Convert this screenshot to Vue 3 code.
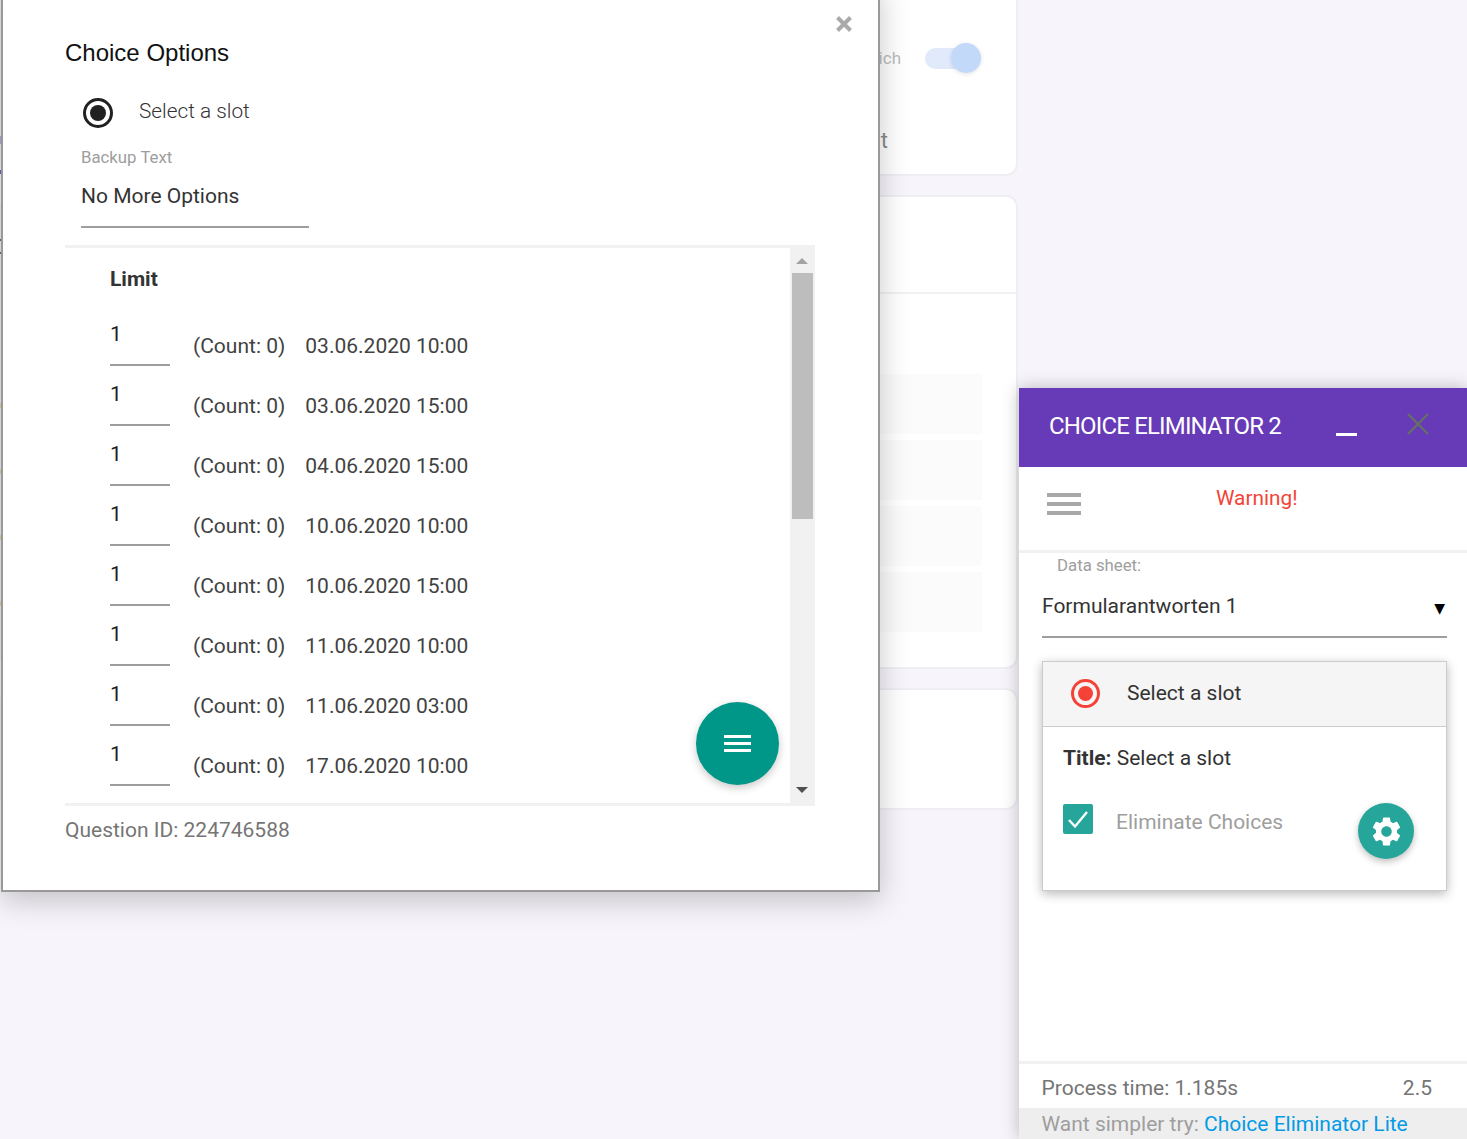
<template>
  <div class="page">
    <!-- page behind the dialog, mostly washed out -->
    <main class="behind">
      <section class="card card-top">
        <div class="switch-row">
          <span class="ghost-label">Which</span>
          <span class="toggle"><i class="knob"></i></span>
        </div>
        <div class="ghost-text">Count</div>
      </section>
      <section class="card card-list">
        <div class="card-head"></div>
        <div class="ghost-rows">
          <div v-for="n in 4" :key="n" class="ghost-row"></div>
        </div>
      </section>
      <section class="card card-last"></section>
    </main>

    <!-- bits of the page that peek out left of the dialog -->
    <i
      v-for="mark in edgeMarks"
      :key="mark.top"
      class="edge-mark"
      :style="{ top: mark.top + 'px', height: mark.height + 'px', background: mark.color }"
    ></i>

    <!-- sidebar -->
    <aside class="sidebar">
      <header class="side-head">
        <h1>CHOICE ELIMINATOR 2</h1>
        <span class="minimize"></span>
        <svg class="side-close" viewBox="0 0 22 22" width="22" height="22">
          <path d="M1 1 21 21M21 1 1 21" stroke="#666e66" stroke-width="2.4" fill="none" />
        </svg>
      </header>
      <div class="side-tools">
        <div class="burger"><i></i><i></i><i></i></div>
        <div class="warning">Warning!</div>
      </div>
      <div class="side-body">
        <label class="sheet-label">Data sheet:</label>
        <div class="sheet-select">
          <span class="sheet-value">Formularantworten 1</span>
          <span class="arrow">▼</span>
        </div>
        <article class="question">
          <div class="question-head">
            <span class="radio-red"><i></i></span>
            <span>Select a slot</span>
          </div>
          <div class="question-body">
            <p class="q-title"><b>Title:</b> Select a slot</p>
            <div class="q-check">
              <span class="checkbox">
                <svg viewBox="0 0 30 30" width="30" height="30">
                  <path d="M6 16 12 22.5 24 8" stroke="#fff" stroke-width="2.4" fill="none" />
                </svg>
              </span>
              <span class="check-label">Eliminate Choices</span>
            </div>
            <button class="gear-btn">
              <svg viewBox="0 0 24 24" width="35" height="35">
                <path fill="#fff" d="M19.14,12.94c0.04-0.3,0.06-0.61,0.06-0.94c0-0.32-0.02-0.64-0.07-0.94l2.03-1.58c0.18-0.14,0.23-0.41,0.12-0.61 l-1.92-3.32c-0.12-0.22-0.37-0.29-0.59-0.22l-2.39,0.96c-0.5-0.38-1.03-0.7-1.62-0.94L14.4,2.81c-0.04-0.24-0.24-0.41-0.48-0.41 h-3.84c-0.24,0-0.43,0.17-0.47,0.41L9.25,5.35C8.66,5.59,8.12,5.92,7.63,6.29L5.24,5.33c-0.22-0.08-0.47,0-0.59,0.22L2.74,8.87 C2.62,9.08,2.66,9.34,2.86,9.48l2.03,1.58C4.84,11.36,4.8,11.69,4.8,12s0.02,0.64,0.07,0.94l-2.03,1.58 c-0.18,0.14-0.23,0.41-0.12,0.61l1.92,3.32c0.12,0.22,0.37,0.29,0.59,0.22l2.39-0.96c0.5,0.38,1.03,0.7,1.62,0.94l0.36,2.54 c0.05,0.24,0.24,0.41,0.48,0.41h3.84c0.24,0,0.44-0.17,0.47-0.41l0.36-2.54c0.59-0.24,1.13-0.56,1.62-0.94l2.39,0.96 c0.22,0.08,0.47,0,0.59-0.22l1.92-3.32c0.12-0.22,0.07-0.47-0.12-0.61L19.14,12.94z M12,15.6c-1.98,0-3.6-1.62-3.6-3.6 s1.62-3.6,3.6-3.6s3.6,1.62,3.6,3.6S13.98,15.6,12,15.6z" />
              </svg>
            </button>
          </div>
        </article>
      </div>
      <footer class="side-foot">
        <div class="process">
          <span>Process time: 1.185s</span>
          <span>2.5</span>
        </div>
        <div class="simpler">Want simpler try: <a href="#">Choice Eliminator Lite</a></div>
      </footer>
    </aside>

    <!-- dialog -->
    <div class="dialog">
      <svg class="dialog-close" viewBox="0 0 18 18" width="18" height="18">
        <path d="M2.5 2.5 15.5 15.5M15.5 2.5 2.5 15.5" stroke="#aaa" stroke-width="4" fill="none" />
      </svg>
      <h2>Choice Options</h2>
      <div class="dialog-radio">
        <span class="radio-dark"><i></i></span>
        <span class="radio-text">Select a slot</span>
      </div>
      <label class="backup-label">Backup Text</label>
      <div class="backup-input">No More Options</div>

      <div class="limits">
        <div class="limits-list">
          <div class="limit-title">Limit</div>
          <div v-for="row in slots" :key="row" class="limit-row">
            <span class="limit-input">1</span>
            <span class="limit-count">(Count: 0)</span>
            <span class="limit-date">{{ row }}</span>
          </div>
          <button class="menu-btn">
            <i></i><i></i><i></i>
          </button>
        </div>
        <div class="scrollbar">
          <span class="sb-up"></span>
          <span class="sb-thumb"></span>
          <span class="sb-down"></span>
        </div>
      </div>
      <div class="question-id">Question ID: 224746588</div>
    </div>
  </div>
</template>

<script setup>
const slots = [
  '03.06.2020 10:00',
  '03.06.2020 15:00',
  '04.06.2020 15:00',
  '10.06.2020 10:00',
  '10.06.2020 15:00',
  '11.06.2020 10:00',
  '11.06.2020 03:00',
  '17.06.2020 10:00'
]

const edgeMarks = [
  { top: 136, height: 8, color: '#b9a6dc' },
  { top: 170, height: 4, color: '#7e57c2' },
  { top: 239, height: 2, color: '#607078' },
  { top: 252, height: 2, color: '#607078' },
  { top: 403, height: 5, color: '#e8d3ae' },
  { top: 469, height: 5, color: '#e8d3ae' },
  { top: 535, height: 5, color: '#e8d3ae' },
  { top: 601, height: 5, color: '#e8d3ae' }
]
</script>

<style>
html, body {
  margin: 0;
  background: #f7f5fb;
}
</style>

<style scoped>
.page {
  position: relative;
  width: 1467px;
  height: 1139px;
  overflow: hidden;
  background: #f7f5fb;
  font-family: Roboto, sans-serif;
  color: #212121;
}

.edge-mark {
  position: absolute;
  left: 0;
  width: 1px;
}

.behind {
  width: 1018px;
  display: flex;
  flex-direction: column;
  gap: 19px;
  margin-top: -20px;
}

.card {
  background: #fff;
  border: 2px solid #efeef3;
  border-radius: 12px;
  box-sizing: border-box;
}

.card-top {
  height: 196px;
  padding: 60px 39px 0 0;
}

.switch-row {
  display: flex;
  justify-content: flex-end;
  align-items: center;
  gap: 24px;
  height: 32px;
}

.ghost-label {
  font-size: 17px;
  color: #bdbdbd;
}

.toggle {
  position: relative;
  display: block;
  width: 52px;
  height: 21px;
  border-radius: 11px;
  background: #e0eafa;
}

.knob {
  position: absolute;
  right: -4px;
  top: -5px;
  width: 30px;
  height: 30px;
  border-radius: 50%;
  background: #c3d9fa;
  box-shadow: 0 1px 4px rgba(0, 0, 0, .12);
}

.ghost-text {
  margin-top: 54px;
  padding-right: 89px;
  text-align: right;
  font-size: 22px;
  line-height: 26px;
  color: #8a8a8a;
}

.card-list {
  height: 474px;
}

.card-head {
  height: 97px;
  box-sizing: border-box;
  border-bottom: 2px solid #f2f2f2;
}

.ghost-rows {
  display: flex;
  flex-direction: column;
  gap: 6px;
  margin: 80px 34px 0 0;
}

.ghost-row {
  height: 60px;
  background: #fbfbfb;
}

.card-last {
  height: 122px;
}

.sidebar {
  position: absolute;
  top: 388px;
  right: 0;
  bottom: 0;
  width: 448px;
  display: flex;
  flex-direction: column;
  background: #fff;
  box-shadow: 0 0 16px rgba(0, 0, 0, .25);
}

.side-head {
  height: 79px;
  display: flex;
  align-items: center;
  background: #673ab7;
  padding-left: 30px;
  box-sizing: border-box;
  position: relative;
}

.side-head h1 {
  margin: 0 0 4px;
  font-size: 24px;
  font-weight: 400;
  color: #fff;
  letter-spacing: -.83px;
}

.minimize {
  position: absolute;
  left: 317px;
  top: 45px;
  width: 21px;
  height: 3px;
  background: #fff;
}

.side-close {
  position: absolute;
  left: 388px;
  top: 25px;
}

.side-tools {
  height: 83px;
  flex: none;
  display: flex;
  border-bottom: 3px solid #f1f1f1;
  position: relative;
}

.burger {
  margin: 26px 0 0 28px;
  width: 34px;
  display: flex;
  flex-direction: column;
  gap: 5px;
}

.burger i {
  height: 4px;
  background: #a8a8a8;
}

.warning {
  position: absolute;
  left: 197px;
  top: 19px;
  font-size: 20.8px;
  line-height: 24px;
  color: #f44336;
}

.side-body {
  flex: 1;
  padding: 0 20px 0 23px;
}

.sheet-label {
  display: block;
  margin-left: 15px;
  font-size: 16.8px;
  line-height: 24px;
  color: #9e9e9e;
}

.sheet-select {
  display: flex;
  justify-content: space-between;
  align-items: center;
  height: 59px;
  border-bottom: 2px solid #9e9e9e;
  font-size: 21px;
  color: #333;
  padding-right: 2px;
}

.sheet-value {
  margin-bottom: 2px;
}

.arrow {
  font-size: 14px;
  color: #000;
  margin-top: 2px;
  font-family: "DejaVu Sans", sans-serif;
}

.question {
  margin-top: 23px;
  border: 1px solid #ccc;
  height: 230px;
  box-sizing: border-box;
  box-shadow: 0 3px 10px rgba(0, 0, 0, .28);
}

.question-head {
  height: 65px;
  display: flex;
  align-items: center;
  background: #f5f5f5;
  border-bottom: 1px solid #ccc;
  box-sizing: border-box;
  font-size: 21px;
  color: #333;
  padding: 0 0 2px 28px;
  gap: 27px;
}

.radio-red {
  width: 29px;
  height: 29px;
  box-sizing: border-box;
  border: 3px solid #f44336;
  border-radius: 50%;
  display: flex;
  align-items: center;
  justify-content: center;
}

.radio-red i {
  width: 15px;
  height: 15px;
  border-radius: 50%;
  background: #f44336;
}

.question-body {
  position: relative;
  padding: 18px 20px;
}

.q-title {
  margin: 0;
  font-size: 21px;
  line-height: 26px;
  color: #333;
}

.q-title b {
  font-weight: 700;
}

.q-check {
  display: flex;
  align-items: flex-start;
  gap: 23px;
  margin-top: 33px;
}

.checkbox {
  width: 30px;
  height: 30px;
  border-radius: 2px;
  background: #26a69a;
}

.checkbox svg {
  display: block;
}

.check-label {
  font-size: 21px;
  line-height: 36px;
  color: #9e9e9e;
}

.gear-btn {
  position: absolute;
  left: 315px;
  top: 76px;
  width: 56px;
  height: 56px;
  padding: 0;
  border: 0;
  border-radius: 50%;
  background: #26a69a;
  display: flex;
  align-items: center;
  justify-content: center;
  box-shadow: 0 3px 7px rgba(0, 0, 0, .25);
}

.side-foot {
  border-top: 3px solid #f1f1f1;
  font-size: 21px;
}

.process {
  display: flex;
  justify-content: space-between;
  height: 44px;
  box-sizing: border-box;
  padding: 10px 35px 0 22.5px;
  line-height: 28px;
  color: #757575;
}

.simpler {
  height: 31px;
  padding-left: 22.5px;
  line-height: 32px;
  background: #eee;
  color: #9e9e9e;
}

.simpler a {
  color: #039be5;
  text-decoration: none;
}

.dialog {
  position: absolute;
  left: 1px;
  top: -20px;
  width: 879px;
  height: 912px;
  box-sizing: border-box;
  background: #fff;
  border: 2px solid #999;
  padding: 56px 62px 0;
  box-shadow: 0 8px 28px rgba(0, 0, 0, .22);
}

.dialog-close {
  position: absolute;
  right: 25px;
  top: 33px;
}

.dialog h2 {
  margin: 0;
  font-family: "Liberation Sans", Arial, sans-serif;
  font-size: 24px;
  line-height: 30px;
  font-weight: 400;
  color: #111;
}

.dialog-radio {
  display: flex;
  align-items: center;
  gap: 26px;
  margin: 30px 0 0 18px;
  height: 30px;
  font-size: 20.8px;
  font-weight: 300;
  color: #333;
}

.radio-text {
  margin-bottom: 4px;
}

.radio-dark {
  width: 30px;
  height: 30px;
  box-sizing: border-box;
  border: 3px solid #212121;
  border-radius: 50%;
  display: flex;
  align-items: center;
  justify-content: center;
}

.radio-dark i {
  width: 16px;
  height: 16px;
  border-radius: 50%;
  background: #212121;
}

.backup-label {
  display: block;
  margin: 17px 0 0 16px;
  font-size: 16.8px;
  line-height: 24px;
  color: #9e9e9e;
}

.backup-input {
  margin: 1px 0 0 16px;
  width: 228px;
  height: 58px;
  box-sizing: border-box;
  padding-top: 13px;
  border-bottom: 2px solid #9e9e9e;
  font-size: 21px;
  line-height: 26px;
  color: #333;
}

.limits {
  display: flex;
  width: 750px;
  height: 561px;
  margin-top: 17px;
  border-top: 3px solid #f1f1f1;
  border-bottom: 3px solid #f1f1f1;
  box-sizing: border-box;
  overflow: hidden;
}

.limits-list {
  position: relative;
  flex: 1;
  padding-left: 45px;
  overflow: hidden;
}

.limit-title {
  margin-top: 17px;
  height: 41px;
  font-size: 21px;
  line-height: 28px;
  font-weight: 700;
  color: #333;
}

.limit-row {
  display: flex;
  align-items: flex-end;
  height: 60px;
  font-size: 21px;
  color: #424242;
}

.limit-input {
  width: 60px;
  height: 46px;
  box-sizing: border-box;
  border-bottom: 2px solid #9e9e9e;
  line-height: 28px;
  color: #212121;
}

.limit-count {
  margin: 0 20px 0 23px;
  line-height: 40px;
}

.limit-date {
  line-height: 40px;
}

.menu-btn {
  position: absolute;
  right: 11px;
  bottom: 18px;
  width: 83px;
  height: 83px;
  border: 0;
  border-radius: 50%;
  background: #009688;
  display: flex;
  flex-direction: column;
  align-items: center;
  justify-content: center;
  gap: 4px;
  box-shadow: 0 3px 8px rgba(0, 0, 0, .22);
}

.menu-btn i {
  width: 27px;
  height: 3px;
  background: #fff;
}

.scrollbar {
  flex: none;
  width: 25px;
  background: #f1f1f1;
  position: relative;
}

.sb-up, .sb-down {
  position: absolute;
  left: 6px;
  width: 0;
  height: 0;
  border-left: 6px solid transparent;
  border-right: 6px solid transparent;
}

.sb-up {
  top: 10px;
  border-bottom: 6px solid #a3a3a3;
}

.sb-down {
  bottom: 10px;
  border-top: 6px solid #505050;
}

.sb-thumb {
  position: absolute;
  left: 2px;
  right: 2px;
  top: 25px;
  height: 246px;
  background: #bdbdbd;
}

.question-id {
  margin-top: 10px;
  font-size: 21px;
  line-height: 28px;
  color: #757575;
}
</style>
